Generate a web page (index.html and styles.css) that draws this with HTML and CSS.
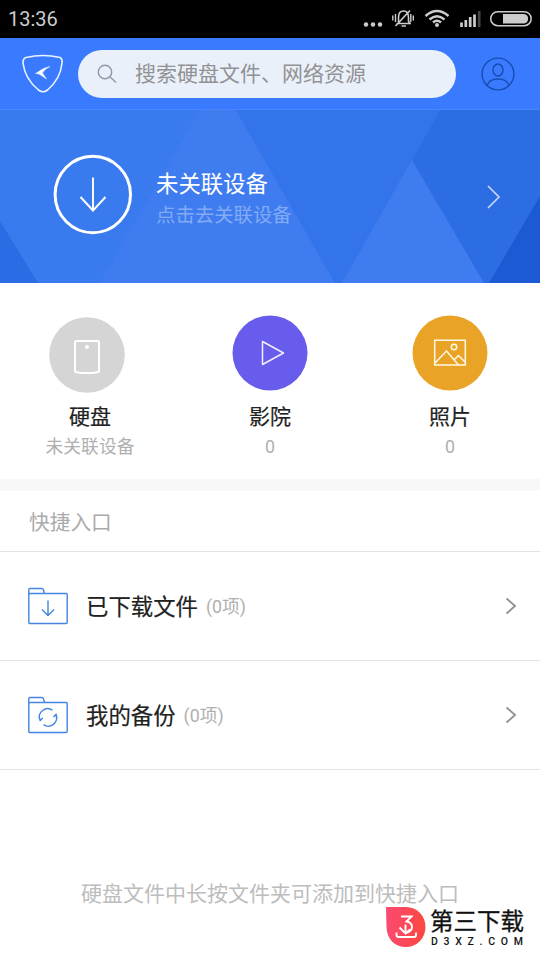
FILE: index.html
```html
<!DOCTYPE html>
<html lang="zh-CN">
<head>
<meta charset="utf-8">
<title>快捷入口</title>
<link rel="stylesheet" href="styles.css">
</head>
<body>
<div class="status">
  <span class="time">13:36</span>
  <svg class="status-icons" width="180" height="38" viewBox="360 0 180 38" fill="none" stroke="#ccc">
    <g fill="#ccc" stroke="none"><circle cx="366" cy="24.500" r="2.200"/><circle cx="373" cy="24.500" r="2.200"/><circle cx="380" cy="24.500" r="2.200"/></g>
    <path d="M396.500 23.500H411M398.500 22V17.500q0-6.500 5-6.500q5 0 5 6.500v4l2 2.500M401.500 26h4.500M395.500 26L410 10.500" stroke-width="1.600"/>
    <path d="M395.500 14v8M392.800 15.500v5M410.800 14v8M413.300 15.500v5" stroke-width="1.400"/>
    <path d="M425.500 16Q437 6 448.500 16M429.500 19.500Q437 13 444.500 19.500M433 22.500Q437 19 441 22.500" stroke-width="2.500"/>
    <circle cx="437" cy="25" r="2" fill="#ccc" stroke="none"/>
    <path d="M461.500 27v-4.500M465.800 27v-7M470.200 27v-10M474.500 27V14.500" stroke-width="2.700"/>
    <path d="M479.200 27V11" stroke="#444" stroke-width="2.700"/>
    <rect x="490.700" y="11.700" width="40.500" height="14" rx="7" stroke-width="1.500"/>
    <path d="M503 14h21a4.800 4.800 0 0 1 0 9.500H503z" fill="#ccc" stroke="none"/>
  </svg>
</div>
<header class="topbar">
  <svg class="logo" width="42" height="40" viewBox="0 0 42 40" fill="none" stroke="#e9f4ff" stroke-width="1.600">
    <path d="M4 3.500Q21-.5 38 3.500Q40.500 4.500 40 9Q38.500 25 25.500 36Q21 39.500 16.500 36Q3 25 1 9Q.8 4.500 4 3.500z"/>
    <path d="M28 12.500Q21 14 17.500 17L13.500 19.500L17 20L24.500 25L20.500 19Q22.500 15 28 12.500z" fill="#fff" stroke-width=".5"/>
  </svg>
  <div class="search">
    <svg width="20" height="20" viewBox="0 0 20 20" fill="none" stroke="#929aa5" stroke-width="1.400"><circle cx="8" cy="8" r="6.700"/><path d="M12.800 12.800L19 18.500"/></svg>
    <span>搜索硬盘文件、网络资源</span>
  </div>
  <svg class="user" width="34" height="34" viewBox="0 0 34 34" fill="none" stroke="#174daf" stroke-width="1.400"><circle cx="17" cy="17" r="15.900"/><ellipse cx="17" cy="13" rx="5" ry="6"/><path d="M6.200 28.500Q8 22 17 22Q26 22 27.800 28.500"/></svg>
</header>
<section class="banner">
  <svg class="facets" width="540" height="173" viewBox="0 110 540 173">
    <path d="M0 221L38 283H0z" fill="#2b6ce4"/>
    <path d="M200 110H236L335 283H100z" fill="#3f7cf0"/>
    <path d="M236 110H440L412 160L342 283H335z" fill="#3474ea"/>
    <path d="M412 160L484 283H342z" fill="#3e7cf0"/>
    <path d="M440 110H540V283H484L412 160z" fill="#2d6de4"/>
    <path d="M540 196V283H489z" fill="#1b5ad2"/>
  </svg>
  <svg class="ring" width="80" height="82" viewBox="0 0 80 82" fill="none" stroke="#fff"><ellipse cx="39.800" cy="40.500" rx="37.700" ry="38.200" stroke-width="3"/><path d="M40 23.500V57M27.500 43L40 56.500L52.500 43" stroke-width="1.900"/></svg>
  <div class="device">
    <div class="device-name">未关联设备</div>
    <div class="device-hint">点击去关联设备</div>
  </div>
  <svg class="next" width="16" height="24" viewBox="0 0 16 24" fill="none" stroke="#c4d8fb" stroke-width="1.700"><path d="M3 1L14 12L3 23"/></svg>
</section>
<section class="categories">
  <div class="category">
    <svg class="disc disc-low" width="76" height="76" viewBox="0 0 76 76" fill="none" stroke="#fff"><circle cx="38" cy="38" r="37.800" fill="#d5d5d5" stroke="none"/><path d="M27.500 24H48.500Q50 24 50 25.500V54Q50 55 48.500 55.200Q38 57 27.500 55.200Q26 55 26 54V25.500Q26 24 27.500 24z" stroke-width="2"/><circle cx="38" cy="30" r="2" fill="#fff" stroke="none"/></svg>
    <div class="label">硬盘</div><div class="count">未关联设备</div>
  </div>
  <div class="category">
    <svg class="disc" width="76" height="76" viewBox="0 0 76 76" fill="none" stroke="#f4edff"><circle cx="38" cy="38" r="37.500" fill="#685cec" stroke="none"/><path d="M30.500 26.500L51.500 38L30.500 49.500z" stroke-width="1.500" stroke-linejoin="round"/></svg>
    <div class="label">影院</div><div class="count">0</div>
  </div>
  <div class="category">
    <svg class="disc" width="76" height="76" viewBox="0 0 76 76" fill="none" stroke="#fff8e3" stroke-width="1.500"><circle cx="38" cy="38" r="37.500" fill="#e9a427" stroke="none"/><path d="M22.700 25.200H53.300V50H22.700zM23 48L34.500 36L46.500 50M42 45L46.500 40.500L53 47"/><circle cx="42" cy="32" r="2.700"/></svg>
    <div class="label">照片</div><div class="count">0</div>
  </div>
</section>
<h2 class="heading">快捷入口</h2>
<div class="row">
  <svg class="folder" width="40" height="38" viewBox="0 0 40 38" fill="none" stroke="#4584df" stroke-width="1.400"><rect x=".8" y="6.500" width="38.400" height="30" rx="1"/><path d="M.8 7.500V2.500Q.8 1.500 2 1.500H14Q15 1.500 15.500 3L16.500 6.500M20 13.500V28.500M14 22.500L20 28.500L26 22.500"/></svg>
  <span class="row-title">已下载文件</span><span class="row-count">(0项)</span>
  <svg class="chevron" width="12" height="18" viewBox="0 0 12 18" fill="none" stroke="#929292" stroke-width="1.900"><path d="M1.500 1.500L10 9L1.500 16.500"/></svg>
</div>
<div class="row">
  <svg class="folder" width="40" height="38" viewBox="0 0 40 38" fill="none" stroke="#4584df" stroke-width="1.400"><rect x=".8" y="6.500" width="38.400" height="30" rx="1"/><path d="M.8 7.500V2.500Q.8 1.500 2 1.500H14Q15 1.500 15.500 3L16.500 6.500M24.500 14.200A8.300 8.300 0 0 0 12 24M11 21L12.200 24.500L14.800 22M15.500 28.700A8.300 8.300 0 0 0 28 19M25.500 21L28 18.300L29 22"/></svg>
  <span class="row-title">我的备份</span><span class="row-count">(0项)</span>
  <svg class="chevron" width="12" height="18" viewBox="0 0 12 18" fill="none" stroke="#929292" stroke-width="1.900"><path d="M1.500 1.500L10 9L1.500 16.500"/></svg>
</div>
<p class="tip">硬盘文件中长按文件夹可添加到快捷入口</p>
<div class="brand">
  <svg width="40" height="40" viewBox="0 0 40 40" fill="none" stroke="#fff" stroke-width="1.900"><defs><linearGradient id="g" x1="0" x2="1"><stop stop-color="#fb4a72"/><stop offset="1" stop-color="#fb4840"/></linearGradient></defs><path d="M0 0H20A19.500 20 0 0 1 20 40C8 40 1 32 .5 20z" fill="url(#g)" stroke="none"/><path d="M15 9.500H25.500L20.500 14.500Q26 15.500 26 20Q25.500 25 20 26M19.500 17.500V26M13.500 20.500L19.500 26.500L24 22.500M10.500 25.500V28Q10.500 30 12.500 30H28Q30 30 30 28V25.500"/></svg>
  <div><div class="brand-name">第三下载</div><div class="brand-url">D3XZ.COM</div></div>
</div>
</body>
</html>
```
FILE: styles.css
```css
* { box-sizing: border-box; }
body {
  position: relative;
  margin: 0;
  width: 540px;
  height: 960px;
  overflow: hidden;
  background: #fff;
  font-family: Roboto, "Noto Sans CJK SC", sans-serif;
  color: #222;
}
svg { display: block; flex: none; }
.status {
  display: flex;
  justify-content: space-between;
  height: 38px;
  background: #000;
}
.time { padding-left: 8px; font-size: 20px; line-height: 39px; color: #ccc; }
.topbar {
  display: flex;
  align-items: center;
  height: 72px;
  padding: 0 25px 0 22px;
  background: #397aff;
  border-bottom: 1px solid #4b86f8;
}
.logo { margin-right: 14px; }
.search {
  display: flex;
  align-items: center;
  gap: 18px;
  width: 378px;
  height: 48px;
  padding-left: 19px;
  border-radius: 24px;
  background: #e9f0fa;
  font-size: 21px;
  line-height: 30px;
  color: #929294;
}
.user { margin-left: auto; }
.banner {
  position: relative;
  display: flex;
  align-items: center;
  height: 173px;
  padding: 0 39px 0 53px;
  background: #3a7aef;
}
.facets { position: absolute; inset: 0; }
.ring, .device, .next { position: relative; }
.ring { margin-top: -4px; }
.device { margin-left: 23px; padding-top: 6px; }
.device-name { font-size: 22.400px; line-height: 32px; color: #fff; }
.device-hint { font-size: 19.400px; line-height: 31px; color: #83abf5; }
.next { margin-left: auto; }
.categories {
  display: grid;
  grid-template-columns: repeat(3, 180px);
  height: 208px;
  padding-top: 32px;
  border-bottom: 12px solid #f8f8f8;
}
.category { display: flex; flex-direction: column; align-items: center; }
.disc-low { margin: 2px 6px -2px 0; }
.label { margin-top: 9px; font-size: 21px; line-height: 34px; -webkit-text-stroke: .2px #222; }
.count { font-size: 17.800px; line-height: 26px; color: #b0b0b0; }
.heading {
  height: 61px;
  margin: 0;
  padding-left: 29px;
  border-bottom: 1px solid #e2e2e2;
  font-size: 20.700px;
  line-height: 64px;
  font-weight: 400;
  color: #aaa;
}
.row {
  display: flex;
  align-items: center;
  height: 109px;
  padding: 0 23px 0 28px;
  border-bottom: 1px solid #e2e2e2;
}
.row-title { margin-left: 18px; padding-bottom: 2px; font-size: 22.400px; -webkit-text-stroke: .2px #222; }
.row-count { margin-left: 8px; padding-bottom: 2px; font-size: 17.800px; color: #b0b0b0; }
.chevron { margin-left: auto; }
.tip {
  margin: 109px 0 0;
  text-align: center;
  font-size: 21px;
  line-height: 30px;
  color: #bdbdbd;
}
.brand {
  position: absolute;
  left: 386px;
  top: 907px;
  display: flex;
  gap: 4px;
  color: #111;
}
.brand-name { padding-top: 1px; font-size: 23.500px; line-height: 28px; -webkit-text-stroke: .3px #111; }
.brand-url { padding-left: 1px; font: 500 10.500px/11px Roboto, sans-serif; letter-spacing: 5.700px; }
```
